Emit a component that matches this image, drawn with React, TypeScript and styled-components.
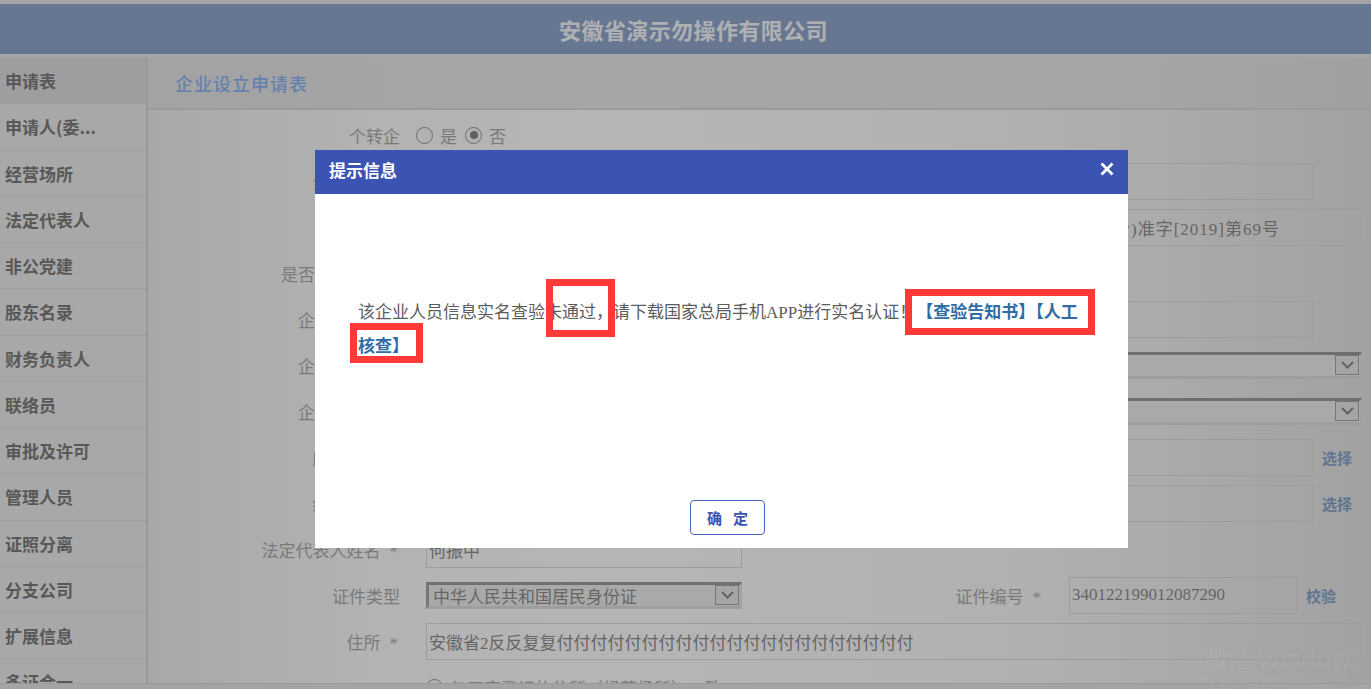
import React from 'react'
import styled, { createGlobalStyle } from 'styled-components'

const SANS = `"Noto Sans CJK SC", "Liberation Sans", sans-serif`
const SERIF = `"Liberation Serif", "Noto Sans CJK SC", serif`

const GlobalStyle = createGlobalStyle`
    html, body {
        margin: 0;
        padding: 0;
    }
    body {
        width: 1371px;
        height: 689px;
        overflow: hidden;
        font-family: ${SERIF};
        background: #d8d8d8;
    }
    * {
        box-sizing: border-box;
    }
`

const Page = styled.div`
    position: relative;
    width: 1371px;
    height: 689px;
    padding-top: 4px;
    display: flex;
    flex-direction: column;
    background: #d8d8d8;
    overflow: hidden;
`

const TopBar = styled.header`
    height: 50px;
    flex: none;
    margin-bottom: 4px;
    padding-left: 16px;
    display: flex;
    align-items: center;
    justify-content: center;
    background: #476da9;
    font-family: ${SANS};
    font-weight: 700;
    font-size: 22px;
    letter-spacing: 0.4px;
    color: #eef2fa;
`

const Body = styled.div`
    height: 625px;
    flex: none;
    display: flex;
`

const Sidebar = styled.nav`
    width: 148px;
    flex: none;
    background: #dfdfdf;
    border-right: 2px solid #bdbdbd;
    overflow: hidden;
`

const SideItem = styled.div<{ $active?: boolean }>`
    height: 46.25px;
    padding-left: 5px;
    display: flex;
    align-items: center;
    background: ${p => p.$active ? '#c9c9c9' : '#dfdfdf'};
    border-bottom: 1px solid #cacaca;
    font-family: ${SANS};
    font-weight: 700;
    font-size: 17px;
    color: #222;
    white-space: nowrap;
`

const Main = styled.main`
    flex: 1;
    display: flex;
    flex-direction: column;
    overflow: hidden;
`

const PanelHeader = styled.div`
    height: 52px;
    flex: none;
    padding-left: 27px;
    display: flex;
    align-items: center;
    background: linear-gradient(90deg, #d3d3d3 0%, #dcdcdc 40%, #d9d9d9 80%, #cdcdcd 100%);
    border-bottom: 2px solid #c0c0c0;
    font-family: ${SERIF};
    font-size: 18px;
    font-weight: 500;
    letter-spacing: 1px;
    color: #3f84ee;
`

const Form = styled.div`
    flex: 1;
    padding: 2px 9px 0 0;
    background: linear-gradient(90deg, #e0e0e0 0%, #fbfbfb 20%, #ffffff 40%, #f4f4f4 72%, #d0d0d0 100%);
    overflow: hidden;
`

const Row = styled.div`
    height: 46px;
    display: flex;
    align-items: center;
`

const Label = styled.div<{ $gap?: number; $grow?: boolean }>`
    ${p => p.$grow ? 'flex: 1;' : 'width: 252px; flex: none;'}
    margin-right: ${p => p.$gap ?? 26}px;
    text-align: right;
    font-family: ${SERIF};
    font-size: 17px;
    color: #727272;
    white-space: nowrap;
`

const Star = styled.span`
    margin-left: 9px;
    margin-right: 2px;
`

const TextBox = styled.div<{ $w?: number; $end?: boolean }>`
    ${p => p.$w ? `width: ${p.$w}px; flex: none;` : 'flex: 1;'}
    height: 37px;
    padding: 0 ${p => p.$end ? '81px' : '4px'} 0 2px;
    display: flex;
    align-items: center;
    justify-content: ${p => p.$end ? 'flex-end' : 'flex-start'};
    border: 1px solid #c3c3c3;
    font-family: ${SERIF};
    font-size: 17px;
    letter-spacing: ${p => p.$end ? '1px' : '0'};
    color: #404040;
    white-space: nowrap;
    overflow: hidden;
`

const SelectBox = styled.div<{ $w?: number }>`
    ${p => p.$w ? `width: ${p.$w}px; flex: none;` : 'flex: 1;'}
    height: 27px;
    padding: 0 1px 0 4px;
    display: flex;
    align-items: center;
    justify-content: space-between;
    background: #e3e3e3;
    border-top: 3px solid #595959;
    border-left: 3px solid #6c6c6c;
    border-right: 2px solid #cfcfcf;
    border-bottom: 3px solid #c9c9c9;
    font-family: ${SERIF};
    font-size: 17px;
    color: #404040;
    white-space: nowrap;
`

const SelectArrow = styled.span`
    width: 24px;
    height: 20px;
    flex: none;
    display: flex;
    align-items: center;
    justify-content: center;
    background: #d9d9d9;
    border: 1px solid #6a6a6a;
`

const Aside = styled.div<{ $w?: number }>`
    width: ${p => p.$w ?? 49}px;
    flex: none;
    padding-left: 9px;
`

const ActionLink = styled.span`
    font-family: ${SANS};
    font-weight: 700;
    font-size: 15px;
    color: #3066a9;
    white-space: nowrap;
`

const RadioGroup = styled.div`
    display: flex;
    align-items: center;
    font-family: ${SERIF};
    font-size: 17px;
    color: #727272;
    white-space: nowrap;
`

const Radio = styled.span<{ $on?: boolean }>`
    width: 17px;
    height: 17px;
    flex: none;
    margin-right: 7px;
    display: inline-flex;
    align-items: center;
    justify-content: center;
    border: 1.5px solid #4e4e4e;
    border-radius: 50%;
    background: #f7f7f7;
    &::after {
        content: '';
        width: 8px;
        height: 8px;
        border-radius: 50%;
        background: ${p => p.$on ? '#333' : 'transparent'};
    }
`

const RadioText = styled.span`
    margin-right: 8px;
`

const Footer = styled.footer`
    flex: 1;
    background: #d6d6d6;
    border-top: 1px solid #b9b9b9;
`

const Shade = styled.div`
    position: absolute;
    inset: 0;
    background: rgba(128, 128, 128, 0.58);
`

const Dialog = styled.div`
    position: absolute;
    left: 315px;
    top: 150px;
    width: 813px;
    height: 398px;
    display: flex;
    flex-direction: column;
    background: #fff;
`

const DialogTitle = styled.div`
    height: 44px;
    flex: none;
    padding: 0 14px 6px;
    display: flex;
    align-items: center;
    justify-content: space-between;
    background: #3b54b4;
    font-family: ${SANS};
    font-weight: 700;
    font-size: 17px;
    color: #fff;
`

const CloseButton = styled.span`
    width: 14px;
    height: 14px;
    display: flex;
    cursor: pointer;
`

const DialogContent = styled.div`
    position: relative;
    flex: 1;
    padding: 101px 20px 0 43px;
    font-family: ${SERIF};
    font-size: 17px;
    line-height: 32px;
    color: #5c5c5c;
`

const NoticeLink = styled.a`
    font-family: ${SANS};
    font-weight: 700;
    color: #2f6ca6;
    text-decoration: none;
`

const Mark = styled.div<{ $x: number; $y: number; $w: number; $h: number }>`
    position: absolute;
    left: ${p => p.$x}px;
    top: ${p => p.$y}px;
    width: ${p => p.$w}px;
    height: ${p => p.$h}px;
    border: 7px solid #ff3838;
    pointer-events: none;
`

const DialogFooter = styled.div`
    flex: none;
    padding: 0 0 13px 12px;
    display: flex;
    justify-content: center;
`

const ConfirmButton = styled.button`
    width: 75px;
    height: 35px;
    padding: 0 0 0 11px;
    background: #fff;
    border: 1.5px solid #4a62c2;
    border-radius: 4px;
    font-family: ${SANS};
    font-weight: 700;
    font-size: 15px;
    letter-spacing: 11px;
    color: #3b54b4;
    cursor: pointer;
`

const Watermark = styled.div`
    position: absolute;
    left: 1203px;
    top: 641px;
    font-family: "Noto Sans CJK SC", "Open Sans", sans-serif;
    font-weight: 300;
    color: rgba(255, 255, 255, 0.07);
    white-space: nowrap;
    pointer-events: none;
`

const WatermarkTitle = styled.div`
    font-size: 25px;
    line-height: 32px;
`

const WatermarkSub = styled.div`
    font-size: 14px;
    line-height: 20px;
`

const sideItems = [
    '申请表', '申请人(委...', '经营场所', '法定代表人', '非公党建', '股东名录', '财务负责人',
    '联络员', '审批及许可', '管理人员', '证照分离', '分支公司', '扩展信息', '多证合一',
]

function Chevron() {
    return (
        <svg width="13" height="8" viewBox="0 0 13 8">
            <polyline points="1,1 6.5,6.5 12,1" fill="none" stroke="#3a3a3a" strokeWidth="2" />
        </svg>
    )
}

function Select({ value, w }: { value?: string; w?: number }) {
    return (
        <SelectBox $w={w}>
            <span>{value}</span>
            <SelectArrow><Chevron /></SelectArrow>
        </SelectBox>
    )
}

export default function App() {
    return (
        <>
            <GlobalStyle />
            <Page>
                <TopBar>安徽省演示勿操作有限公司</TopBar>
                <Body>
                    <Sidebar>
                        {sideItems.map((item, i) => (
                            <SideItem key={item} $active={i === 0}>{item}</SideItem>
                        ))}
                    </Sidebar>
                    <Main>
                        <PanelHeader>企业设立申请表</PanelHeader>
                        <Form>
                            <Row>
                                <Label $gap={16}>个转企</Label>
                                <RadioGroup>
                                    <Radio />
                                    <RadioText>是</RadioText>
                                    <Radio $on />
                                    <RadioText>否</RadioText>
                                </RadioGroup>
                            </Row>
                            <Row>
                                <Label>企业名称<Star>*</Star></Label>
                                <TextBox />
                                <Aside />
                            </Row>
                            <Row>
                                <Label>预核文号</Label>
                                <TextBox $end>皖名称预核(合)准字[2019]第69号</TextBox>
                            </Row>
                            <Row>
                                <Label>是否自贸区企业</Label>
                            </Row>
                            <Row>
                                <Label>企业名称字号</Label>
                                <TextBox />
                                <Aside />
                            </Row>
                            <Row>
                                <Label>企业登记类型</Label>
                                <Select />
                            </Row>
                            <Row>
                                <Label>企业经济性质</Label>
                                <Select />
                            </Row>
                            <Row>
                                <Label>所属行业<Star>*</Star></Label>
                                <TextBox />
                                <Aside><ActionLink>选择</ActionLink></Aside>
                            </Row>
                            <Row>
                                <Label>经营范围<Star>*</Star></Label>
                                <TextBox />
                                <Aside><ActionLink>选择</ActionLink></Aside>
                            </Row>
                            <Row>
                                <Label>法定代表人姓名<Star>*</Star></Label>
                                <TextBox $w={316}>何振中</TextBox>
                            </Row>
                            <Row>
                                <Label>证件类型</Label>
                                <Select w={316} value="中华人民共和国居民身份证" />
                                <Label $grow>证件编号<Star>*</Star></Label>
                                <TextBox $w={228}>340122199012087290</TextBox>
                                <Aside $w={65}><ActionLink>校验</ActionLink></Aside>
                            </Row>
                            <Row>
                                <Label>住所<Star>*</Star></Label>
                                <TextBox>安徽省2反反复复付付付付付付付付付付付付付付付付付付付付付</TextBox>
                            </Row>
                            <Row>
                                <Label />
                                <RadioGroup>
                                    <Radio $on />
                                    <span>与工商登记的住所（经营场所）一致</span>
                                </RadioGroup>
                            </Row>
                        </Form>
                    </Main>
                </Body>
                <Footer />
                <Shade />
                <Dialog>
                    <DialogTitle>
                        <span>提示信息</span>
                        <CloseButton>
                            <svg width="14" height="14" viewBox="0 0 14 14">
                                <path d="M1.5 1.5L12.5 12.5M12.5 1.5L1.5 12.5" stroke="#fff" strokeWidth="2.8" />
                            </svg>
                        </CloseButton>
                    </DialogTitle>
                    <DialogContent>
                        该企业人员信息实名查验未通过，请下载国家总局手机APP进行实名认证！
                        <NoticeLink href="#">【查验告知书】</NoticeLink>
                        <NoticeLink href="#">【人工<br />核查】</NoticeLink>
                        <Mark $x={231} $y={85} $w={69} $h={58} />
                        <Mark $x={590} $y={95} $w={190} $h={46} />
                        <Mark $x={35} $y={129} $w={73} $h={40} />
                    </DialogContent>
                    <DialogFooter>
                        <ConfirmButton>确定</ConfirmButton>
                    </DialogFooter>
                </Dialog>
                <Watermark>
                    <WatermarkTitle>激活 Windows</WatermarkTitle>
                    <WatermarkSub>转到“设置”以激活 Windows。</WatermarkSub>
                </Watermark>
            </Page>
        </>
    )
}
